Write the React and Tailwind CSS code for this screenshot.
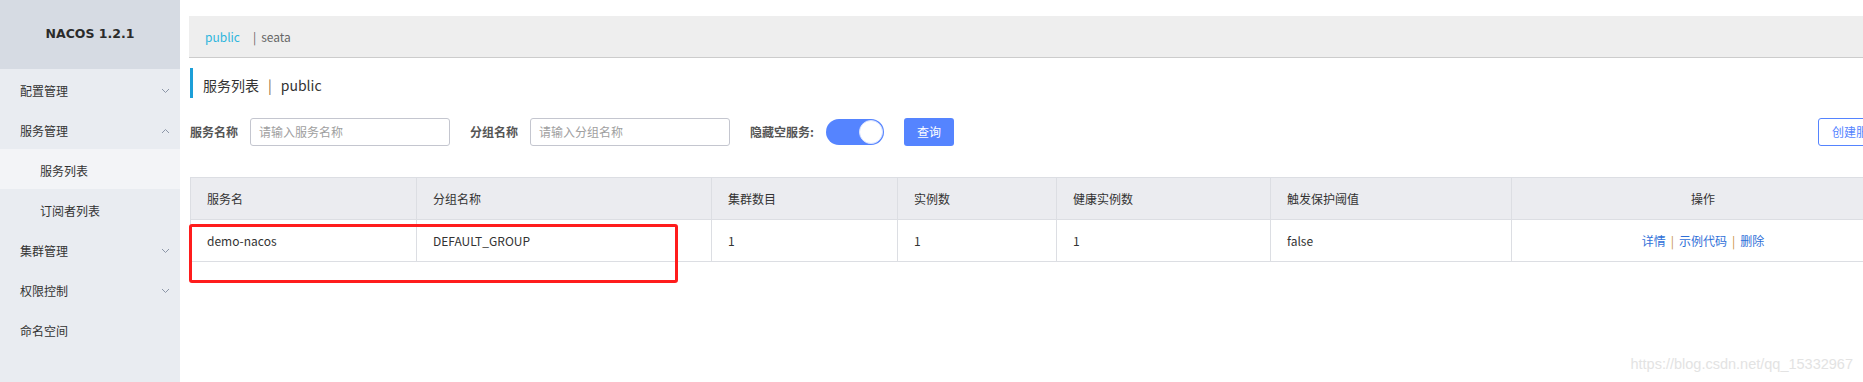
import React from 'react';

const font = { fontFamily: '"Noto Sans CJK SC", "Noto Sans", sans-serif' };

function Chevron({ up }) {
  return (
    <svg width="9" height="6" viewBox="0 0 9 6" className="text-[#8c96a8]">
      <path
        d={up ? 'M1 5 L4.5 1.5 L8 5' : 'M1 1 L4.5 4.5 L8 1'}
        fill="none"
        stroke="currentColor"
        strokeWidth="1"
      />
    </svg>
  );
}

const menu = [
  { label: '配置管理', arrow: 'down' },
  { label: '服务管理', arrow: 'up' },
  { label: '服务列表', sub: true, active: true },
  { label: '订阅者列表', sub: true },
  { label: '集群管理', arrow: 'down' },
  { label: '权限控制', arrow: 'down' },
  { label: '命名空间' },
];

const columns = ['服务名', '分组名称', '集群数目', '实例数', '健康实例数', '触发保护阈值', '操作'];
const row = ['demo-nacos', 'DEFAULT_GROUP', '1', '1', '1', 'false'];

function Sidebar() {
  return (
    <aside className="w-[180px] shrink-0 h-full bg-[#e9ecf1]">
      <div className="h-[69px] bg-[#d6dbe3] flex items-center justify-center">
        <span
          className="text-[12.5px] font-bold text-[#2b2b2b]"
          style={{ fontFamily: '"DejaVu Sans", Verdana, sans-serif' }}
        >
          NACOS 1.2.1
        </span>
      </div>
      <ul>
        {menu.map((m) => (
          <li
            key={m.label}
            className={`h-10 flex items-center justify-between pt-[3px] pr-[10px] text-xs text-[#333] ${
              m.sub ? 'pl-10' : 'pl-5'
            } ${m.active ? 'bg-[#f3f4f7]' : ''}`}
          >
            <span>{m.label}</span>
            {m.arrow && <Chevron up={m.arrow === 'up'} />}
          </li>
        ))}
      </ul>
    </aside>
  );
}

function Filters() {
  return (
    <div className="mt-5 flex items-center h-7 text-xs">
      <span className="font-bold text-[#555] w-[60px]">服务名称</span>
      <div className="w-[200px] h-7 border border-[#c4c6cf] rounded-[3px] flex items-center pl-2 text-[#a0a0a0]">
        请输入服务名称
      </div>
      <span className="font-bold text-[#555] ml-5 w-[60px]">分组名称</span>
      <div className="w-[200px] h-7 border border-[#c4c6cf] rounded-[3px] flex items-center pl-2 text-[#a0a0a0]">
        请输入分组名称
      </div>
      <span className="font-bold text-[#555] ml-5">隐藏空服务:</span>
      <div className="ml-3 w-[58px] h-[26px] rounded-full bg-[#5584ff] flex items-center justify-end pr-px">
        <div className="w-6 h-6 rounded-full bg-white border border-[#d8e2ff]" />
      </div>
      <button className="ml-5 w-[50px] h-7 rounded-[3px] bg-[#5584ff] text-white text-xs">查询</button>
      <button className="ml-auto w-[76px] h-7 rounded-[3px] border border-[#5584ff] text-[#5584ff] text-xs whitespace-nowrap">
        创建服务
      </button>
    </div>
  );
}

function Table() {
  return (
    <div className="relative mt-[31px]">
      <div className="grid grid-cols-[226px_295px_186px_159px_214px_241px_383px] border-t border-l border-[#dcdee3] text-xs text-[#333]">
        {columns.map((c, i) => (
          <div
            key={c}
            className={`h-[42px] bg-[#ebecf0] border-r border-b border-[#dcdee3] flex items-center ${
              i === 6 ? 'justify-center' : 'pl-4'
            }`}
          >
            {c}
          </div>
        ))}
        {row.map((v, i) => (
          <div key={i} className="h-[42px] border-r border-b border-[#dcdee3] flex items-center pl-4">
            {v}
          </div>
        ))}
        <div className="h-[42px] border-r border-b border-[#dcdee3] flex items-center justify-center text-[#2f6fd8]">
          <span>详情</span>
          <span className="mx-[5px] text-[#c8913a]">|</span>
          <span>示例代码</span>
          <span className="mx-[5px] text-[#c8913a]">|</span>
          <span>删除</span>
        </div>
      </div>
      <div className="absolute left-[-1px] top-[47px] w-[489px] h-[59px] border-[3px] border-[#ff1c1c] rounded-[3px]" />
    </div>
  );
}

export default function App() {
  return (
    <div className="relative flex w-[1863px] h-[382px] overflow-hidden bg-white" style={font}>
      <Sidebar />
      <main className="flex-1 min-w-0 overflow-hidden">
        <div className="w-[1714px] pl-[9px] pt-4">
          <div className="h-[42px] bg-[#eeeeee] border-b border-[#cccccc] flex items-center pl-4 pt-px text-xs">
            <span className="text-[#2eb6dd]">public</span>
            <span className="ml-[13px] text-[#666]">|</span>
            <span className="ml-[5px] text-[#666]">seata</span>
          </div>
          <div className="ml-px">
            <div className="mt-[10px] h-[30px] border-l-[3px] border-[#1c9fd8] flex items-center pl-[10px] pt-[3px] text-sm text-[#333]">
              <span>服务列表</span>
              <span className="mx-[9px] text-[#8a6a3a]">|</span>
              <span>public</span>
            </div>
            <Filters />
            <Table />
          </div>
        </div>
      </main>
      <div
        className="absolute right-[10px] bottom-[6px] text-[14.5px] text-[#e3e3e3]"
        style={{ fontFamily: '"Liberation Sans", Arial, sans-serif' }}
      >
        https://blog.csdn.net/qq_15332967
      </div>
    </div>
  );
}
